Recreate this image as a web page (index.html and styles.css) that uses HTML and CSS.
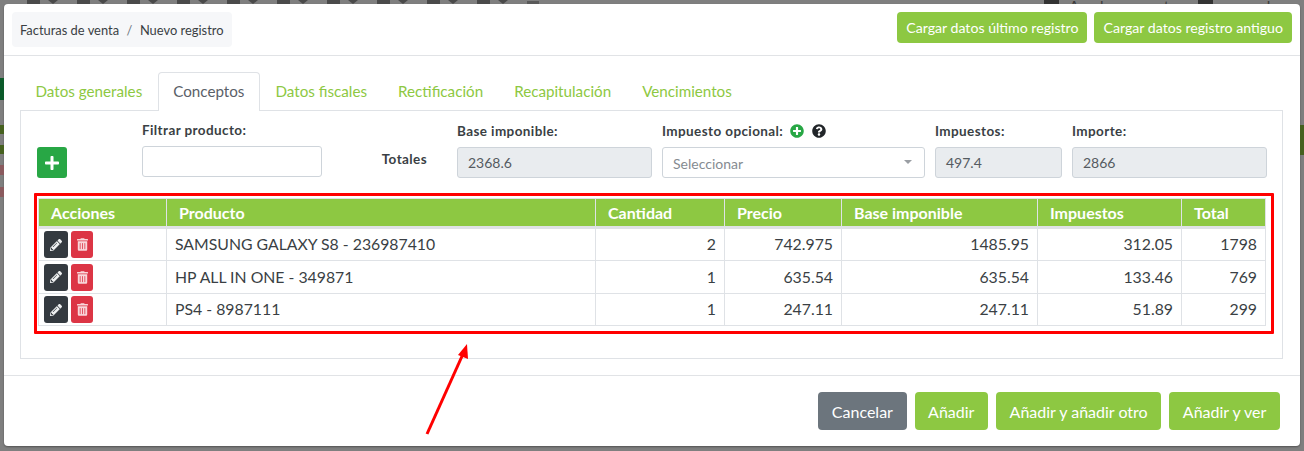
FILE: index.html
```html
<!DOCTYPE html>
<html lang="en">
<head>
    <meta charset="UTF-8">
    <meta name="viewport" content="width=device-width, initial-scale=1.0">
    <title>Nuevo registro</title>
    <link rel="stylesheet" href="styles.css">
</head>
<body>
    <svg class="icon-defs" xmlns="http://www.w3.org/2000/svg">
        <symbol id="i-pencil" viewBox="0 0 512 512"><path d="M497.9 142.1l-46.1 46.1c-4.7 4.7-12.3 4.7-17 0l-111-111c-4.7-4.7-4.7-12.3 0-17l46.1-46.1c18.7-18.7 49.1-18.7 67.9 0l60.1 60.1c18.8 18.7 18.8 49.1 0 67.9zM284.2 99.8L21.6 362.4.4 483.9c-2.9 16.4 11.4 30.6 27.8 27.8l121.5-21.3 262.6-262.6c4.7-4.7 4.7-12.3 0-17l-111-111c-4.8-4.7-12.4-4.7-17.1 0zM124.1 339.9c-5.5-5.5-5.5-14.3 0-19.8l154-154c5.5-5.5 14.3-5.5 19.8 0s5.5 14.3 0 19.8l-154 154c-5.5 5.5-14.3 5.5-19.8 0zM88 424h48v36.3l-64.5 11.3-31.1-31.1L51.7 376H88v48z"/></symbol>
        <symbol id="i-trash" viewBox="0 0 448 512"><path d="M32 464a48 48 0 0 0 48 48h288a48 48 0 0 0 48-48V128H32zm272-256a16 16 0 0 1 32 0v224a16 16 0 0 1-32 0zm-96 0a16 16 0 0 1 32 0v224a16 16 0 0 1-32 0zm-96 0a16 16 0 0 1 32 0v224a16 16 0 0 1-32 0zM432 32H312l-9.4-18.7A24 24 0 0 0 281.1 0H166.8a23.72 23.72 0 0 0-21.4 13.3L136 32H16A16 16 0 0 0 0 48v32a16 16 0 0 0 16 16h416a16 16 0 0 0 16-16V48a16 16 0 0 0-16-16z"/></symbol>
        <symbol id="i-plus" viewBox="0 0 448 512"><path d="M416 208H272V64c0-17.67-14.33-32-32-32h-32c-17.67 0-32 14.33-32 32v144H32c-17.67 0-32 14.33-32 32v32c0 17.67 14.33 32 32 32h144v144c0 17.67 14.33 32 32 32h32c17.67 0 32-14.33 32-32V304h144c17.67 0 32-14.33 32-32v-32c0-17.67-14.33-32-32-32z"/></symbol>
        <symbol id="i-plus-circle" viewBox="0 0 512 512"><path d="M256 8C119 8 8 119 8 256s111 248 248 248 248-111 248-248S393 8 256 8zm144 276c0 6.6-5.4 12-12 12h-92v92c0 6.6-5.4 12-12 12h-56c-6.6 0-12-5.4-12-12v-92h-92c-6.6 0-12-5.4-12-12v-56c0-6.6 5.4-12 12-12h92v-92c0-6.6 5.4-12 12-12h56c6.6 0 12 5.4 12 12v92h92c6.6 0 12 5.4 12 12v56z"/></symbol>
        <symbol id="i-question" viewBox="0 0 512 512"><path d="M504 256c0 136.997-111.043 248-248 248S8 392.997 8 256C8 119.083 119.043 8 256 8s248 111.083 248 248zM262.655 90c-54.497 0-89.255 22.957-116.549 63.758-3.536 5.286-2.353 12.415 2.715 16.258l34.699 26.31c5.205 3.947 12.621 3.008 16.665-2.122 17.864-22.658 30.113-35.797 57.303-35.797 20.429 0 45.698 13.148 45.698 32.958 0 14.976-12.363 22.667-32.534 33.976C247.128 238.528 216 254.941 216 296v4c0 6.627 5.373 12 12 12h56c6.627 0 12-5.373 12-12v-1.333c0-28.462 83.186-29.647 83.186-106.667 0-58.002-60.165-102-116.531-102zM256 338c-25.365 0-46 20.635-46 46 0 25.364 20.635 46 46 46s46-20.636 46-46c0-25.365-20.635-46-46-46z"/></symbol>
    </svg>

    <!-- page behind the modal, dimmed -->
    <div class="backdrop-top">
        <span class="bd-tool"></span><span class="bd-tool"></span><span class="bd-tool"></span><span class="bd-tool"></span>
        <span class="bd-tool"></span><span class="bd-tool"></span><span class="bd-tool"></span><span class="bd-tool"></span>
        <span class="bd-tool"></span><span class="bd-tool"></span>
        <span class="bd-last"></span>
        <span class="bd-link bd-help">Ayuda y soporte</span>
        <span class="bd-link bd-manual">manual</span>
    </div>
    <div class="backdrop-left">
        <span class="bd-green"></span>
        <span class="bd-olive"></span>
        <span class="bd-olive"></span>
        <span class="bd-red"></span>
        <span class="bd-red"></span>
    </div>
    <div class="backdrop-right"></div>

    <div class="modal">
        <div class="modal-header">
            <div class="breadcrumb">
                <span>Facturas de venta</span>
                <span class="crumb-sep">/</span>
                <span>Nuevo registro</span>
            </div>
            <div class="header-actions">
                <a class="btn btn-green btn-sm">Cargar datos último registro</a>
                <a class="btn btn-green btn-sm">Cargar datos registro antiguo</a>
            </div>
        </div>

        <div class="modal-body">
            <ul class="tabs">
                <li class="tab">Datos generales</li>
                <li class="tab active">Conceptos</li>
                <li class="tab">Datos fiscales</li>
                <li class="tab">Rectificación</li>
                <li class="tab">Recapitulación</li>
                <li class="tab">Vencimientos</li>
            </ul>

            <div class="tab-content">
                <div class="filters">
                    <div class="field">
                        <a class="btn-add"><svg class="icon-plus"><use href="#i-plus"/></svg></a>
                    </div>
                    <div class="field field-filter">
                        <label>Filtrar producto:</label>
                        <input class="input" type="text">
                    </div>
                    <div class="field totals-label">Totales</div>
                    <div class="field">
                        <label>Base imponible:</label>
                        <div class="input readonly">2368.6</div>
                    </div>
                    <div class="field">
                        <label>Impuesto opcional:
                            <svg class="icon-label green"><use href="#i-plus-circle"/></svg>
                            <svg class="icon-label"><use href="#i-question"/></svg>
                        </label>
                        <div class="input select">
                            <span>Seleccionar</span>
                            <i class="caret"></i>
                        </div>
                    </div>
                    <div class="field">
                        <label>Impuestos:</label>
                        <div class="input readonly">497.4</div>
                    </div>
                    <div class="field">
                        <label>Importe:</label>
                        <div class="input readonly">2866</div>
                    </div>
                </div>

                <div class="highlight">
                    <table class="lines">
                        <colgroup>
                            <col class="c-actions"><col class="c-product"><col class="c-qty"><col class="c-price">
                            <col class="c-base"><col class="c-tax"><col class="c-total">
                        </colgroup>
                        <thead>
                            <tr>
                                <th>Acciones</th>
                                <th>Producto</th>
                                <th>Cantidad</th>
                                <th>Precio</th>
                                <th>Base imponible</th>
                                <th>Impuestos</th>
                                <th>Total</th>
                            </tr>
                        </thead>
                        <tbody>
                            <tr>
                                <td class="row-actions">
                                    <a class="btn-icon dark"><svg><use href="#i-pencil"/></svg></a>
                                    <a class="btn-icon red"><svg><use href="#i-trash"/></svg></a>
                                </td>
                                <td>SAMSUNG GALAXY S8 - 236987410</td>
                                <td class="num">2</td>
                                <td class="num">742.975</td>
                                <td class="num">1485.95</td>
                                <td class="num">312.05</td>
                                <td class="num">1798</td>
                            </tr>
                            <tr>
                                <td class="row-actions">
                                    <a class="btn-icon dark"><svg><use href="#i-pencil"/></svg></a>
                                    <a class="btn-icon red"><svg><use href="#i-trash"/></svg></a>
                                </td>
                                <td>HP ALL IN ONE - 349871</td>
                                <td class="num">1</td>
                                <td class="num">635.54</td>
                                <td class="num">635.54</td>
                                <td class="num">133.46</td>
                                <td class="num">769</td>
                            </tr>
                            <tr class="row-last">
                                <td class="row-actions">
                                    <a class="btn-icon dark"><svg><use href="#i-pencil"/></svg></a>
                                    <a class="btn-icon red"><svg><use href="#i-trash"/></svg></a>
                                </td>
                                <td>PS4 - 8987111</td>
                                <td class="num">1</td>
                                <td class="num">247.11</td>
                                <td class="num">247.11</td>
                                <td class="num">51.89</td>
                                <td class="num">299</td>
                            </tr>
                        </tbody>
                    </table>
                </div>
            </div>
        </div>

        <div class="modal-footer">
            <a class="btn btn-gray">Cancelar</a>
            <a class="btn btn-green">Añadir</a>
            <a class="btn btn-green">Añadir y añadir otro</a>
            <a class="btn btn-green">Añadir y ver</a>
        </div>
    </div>

    <!-- annotation arrow drawn over the screenshot -->
    <svg class="arrow" viewBox="0 0 60 100" xmlns="http://www.w3.org/2000/svg">
        <line x1="7" y1="94" x2="43" y2="14" stroke="#f00" stroke-width="3"/>
        <polygon points="47,4 48,19 38,15" fill="#f00"/>
    </svg>
</body>
</html>
```

FILE: styles.css
```css
* {
    box-sizing: border-box;
}
html, body {
    height: 451px;
    overflow: hidden;
}
body {
    position: relative;
    margin: 0;
    padding: 4px 4px 0;
    background-color: #7f7f7f;
    font-family: Lato, "Open Sans", sans-serif;
    font-size: 14px;
    color: #3a3f44;
}
a {
    text-decoration: none;
}
.icon-defs {
    display: none;
}

/* dimmed page behind the modal */
.backdrop-top {
    position: absolute;
    top: 0;
    left: 0;
    width: 100%;
    height: 4px;
    padding-left: 27px;
    display: flex;
    overflow: hidden;
}
.bd-tool {
    position: relative;
    width: 13px;
    height: 4px;
    margin-right: 37px;
    background: #4a4a4a;
}
.bd-tool::after {
    content: "";
    position: absolute;
    left: 21px;
    top: 0;
    border: 5px solid transparent;
    border-top: 4px solid #4a4a4a;
    border-bottom: 0;
}
.bd-last {
    width: 12px;
    height: 3px;
    margin-top: 1px;
    background: #5a5a5a;
}
.bd-link {
    position: relative;
    font-size: 15.2px;
    line-height: 14px;
    margin-top: -1px;
    color: #3c3c3c;
}
.bd-help {
    margin-left: 505px;
    padding-left: 25px;
}
.bd-manual {
    margin-left: 21px;
    padding-left: 24px;
}
.bd-help::before, .bd-manual::before {
    content: "";
    position: absolute;
    left: 0;
    top: 0;
    width: 15px;
    height: 14px;
    background: #333;
}
.backdrop-left {
    position: absolute;
    left: 0;
    top: 78px;
    width: 4px;
    display: flex;
    flex-direction: column;
}
.bd-green {
    height: 22px;
    margin-bottom: 25px;
    background: #0b5a2a;
}
.bd-olive {
    height: 9px;
    margin-bottom: 11px;
    background: #46611f;
}
.bd-red {
    height: 10px;
    margin-bottom: 12px;
    background: #8a5a5e;
}
.backdrop-right {
    position: absolute;
    right: 0;
    top: 125px;
    width: 4px;
    height: 30px;
    background: #46611f;
}

/* modal */
.modal {
    width: 1296px;
    height: 442px;
    background: #fff;
    border-radius: 4px;
    box-shadow: 0 1px 2px rgba(0, 0, 0, .35);
}
.modal-header {
    display: flex;
    justify-content: space-between;
    align-items: flex-start;
    height: 52px;
    padding: 8px;
    border-bottom: 1px solid #e1e3e6;
}
.breadcrumb {
    display: flex;
    align-items: center;
    height: 35px;
    padding: 0 8px;
    background: #f6f7f9;
    border-radius: 4px;
    font-size: 12.9px;
    color: #3a3f44;
}
.crumb-sep {
    margin: 0 7.5px;
    color: #6c757d;
}
.header-actions {
    display: flex;
    gap: 7px;
}

.btn {
    display: flex;
    align-items: center;
    justify-content: center;
    height: 38px;
    padding: 0 13.6px;
    border-radius: 4px;
    color: #fff;
    font-size: 16px;
}
.btn-sm {
    height: 31px;
    padding: 0 9px;
    font-size: 14.15px;
}
.btn-green {
    background-color: #8dc842;
}
.btn-gray {
    background-color: #6c757d;
}

.modal-body {
    padding: 16px 17px 0 16px;
}
.tabs {
    display: flex;
    margin: 0;
    padding: 0;
    list-style: none;
}
.tab {
    height: 39px;
    line-height: 37px;
    padding: 0 14.5px;
    margin-bottom: -1px;
    font-size: 15.2px;
    color: #8dc842;
    border: 1px solid transparent;
    border-bottom: 0;
    position: relative;
}
.tab.active {
    background: #fff;
    color: #5a6068;
    border-color: #dfe2e6;
    border-radius: 4px 4px 0 0;
}

.tab-content {
    height: 249px;
    padding: 9px 0 0 16px;
    border: 1px solid #dfe2e6;
}
.filters {
    display: grid;
    grid-template-columns: 95px 180px 115px 195px 263px 127px 195px;
    column-gap: 10px;
    align-items: end;
}
.field label {
    display: block;
    height: 20px;
    line-height: 20px;
    margin-bottom: 6px;
    font-size: 13.5px;
    font-weight: 700;
    letter-spacing: .4px;
    color: #3a3f44;
}
.field-filter {
    margin-bottom: 1px;
}
.totals-label {
    height: 31px;
    line-height: 24px;
    padding-right: 20px;
    text-align: right;
    font-size: 13.5px;
    font-weight: 700;
    letter-spacing: .4px;
}
.input {
    display: flex;
    align-items: center;
    width: 100%;
    height: 31px;
    padding: 0 10px;
    background: #fff;
    border: 1px solid #ced4da;
    border-radius: 3px;
    font-family: inherit;
    font-size: 14px;
    color: #555b61;
}
.readonly {
    background-color: #e9ecef;
}
.select {
    justify-content: space-between;
    padding-top: 2px;
    color: #858b91;
}
.caret {
    border: 4px solid transparent;
    border-top: 4px solid #9a9ea3;
    border-bottom: 0;
    margin-right: 2px;
    margin-top: -3px;
}
.btn-add {
    display: flex;
    align-items: center;
    justify-content: center;
    width: 30px;
    height: 31px;
    background: #28a745;
    border-radius: 3px;
}
.icon-plus {
    width: 14px;
    height: 16px;
    fill: #fff;
}
.icon-label {
    width: 14px;
    height: 14px;
    margin-left: 3.5px;
    vertical-align: -2px;
    fill: #212529;
}
.icon-label.green {
    fill: #28a745;
}

/* lines table with the red annotation frame */
.highlight {
    width: 1240px;
    height: 141px;
    margin: 15px 0 0 -3px;
    padding: 2px 6px 0 1px;
    border: 3px solid #f00;
    border-radius: 1px;
}
.lines {
    width: 1227px;
    table-layout: fixed;
    border-collapse: collapse;
    font-size: 15.8px;
}
.c-actions { width: 128px; }
.c-product { width: 429px; }
.c-qty { width: 129px; }
.c-price { width: 117px; }
.c-base { width: 196px; }
.c-tax { width: 144px; }
.c-total { width: 84px; }
.lines th {
    height: 29px;
    padding: 0 12px;
    text-align: left;
    font-size: 16px;
    font-weight: 700;
    color: #fff;
    background-color: #8dc842;
    border: 1px solid #dfe2e6;
    border-bottom-width: 3px;
}
.lines td {
    height: 33px;
    padding: 0 8px 2px;
    border: 1px solid #dfe2e6;
    color: #3a3f44;
}
.lines .row-last td {
    height: 32px;
}
.lines td.num {
    text-align: right;
}
.lines td.row-actions {
    padding: 0 0 0 5px;
    font-size: 0;
}
.btn-icon {
    display: inline-flex;
    align-items: center;
    justify-content: center;
    width: 24px;
    height: 27px;
    margin-right: 3px;
    border-radius: 3px;
    vertical-align: middle;
}
.btn-icon svg {
    width: 12px;
    height: 12px;
    fill: #eef0f1;
}
.btn-icon.dark {
    background: #343a40;
}
.btn-icon.red {
    width: 22px;
    background: #dc3545;
}
.btn-icon.red svg {
    width: 11px;
    height: 13px;
    fill: #f8d7da;
}

.modal-footer {
    display: flex;
    justify-content: flex-end;
    gap: 8px;
    margin-top: 16px;
    padding: 16px 20px;
    border-top: 1px solid #e1e3e6;
}

.arrow {
    position: absolute;
    left: 420px;
    top: 340px;
    width: 60px;
    height: 100px;
}
```
